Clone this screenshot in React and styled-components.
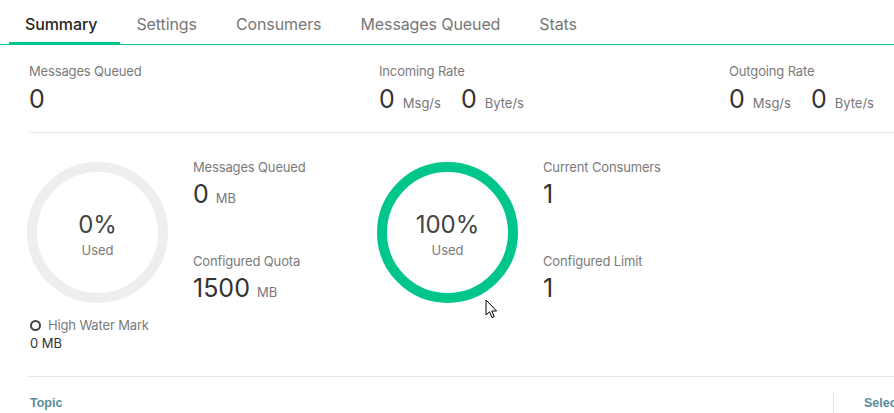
import React from "react";
import styled, { createGlobalStyle } from "styled-components";

const Global = createGlobalStyle`
  html, body { margin: 0; padding: 0; background: #fff; overflow: hidden; }
  body { font-family: "Inter", "Noto Sans", "Liberation Sans", sans-serif; color: #333; }
`;

const GREEN = "#00c68b";

const Page = styled.div`
  position: relative;
  width: 894px;
  height: 413px;
  overflow: hidden;
`;

const TabBar = styled.div`
  display: flex;
  height: 44px;
  padding-left: 9px;
  border-bottom: 1px solid ${GREEN};
`;

const Tab = styled.div`
  position: relative;
  display: flex;
  align-items: center;
  padding: 4px 23px 0 16px;
  font-size: 16px;
  letter-spacing: -0.1px;
  color: ${(p) => (p.$active ? "#262626" : "#777")};
  font-weight: ${(p) => (p.$active ? 500 : 400)};
  &::after {
    content: "";
    display: ${(p) => (p.$active ? "block" : "none")};
    position: absolute;
    left: 0;
    right: 0;
    bottom: -1px;
    height: 3px;
    background: ${GREEN};
  }
`;

const Content = styled.div`
  padding-left: 29px;
  width: 1100px;
`;

const StatsRow = styled.div`
  display: grid;
  grid-template-columns: repeat(3, 350px);
  padding: 18px 0 18px;
  border-bottom: 1px solid #e6e6e6;
`;

const Stat = styled.div`
  display: flex;
  flex-direction: column;
`;

const Label = styled.div`
  font-size: 13px;
  line-height: 16px;
  letter-spacing: -0.15px;
  color: #7b7b7b;
  white-space: nowrap;
`;

const ValueLine = styled.div`
  display: flex;
  align-items: baseline;
  margin-top: ${(p) => p.$mt ?? 5}px;
  white-space: nowrap;
`;

const Value = styled.span`
  font-size: 25px;
  line-height: 30px;
  color: #333;
  margin-left: ${(p) => p.$ml || 0}px;
`;

const Unit = styled.span`
  font-size: 13px;
  color: #777;
  margin-left: ${(p) => p.$ml ?? 8}px;
`;

const GaugeRow = styled.div`
  display: grid;
  grid-template-columns: repeat(2, 350px);
  box-sizing: border-box;
  padding-top: 29px;
  margin-left: -2px;
  height: 244px;
  border-bottom: 1px solid #e6e6e6;
`;

const GaugeGroup = styled.div`
  display: flex;
  gap: 25px;
`;

const Ring = styled.div`
  width: 141px;
  height: 141px;
  flex: none;
  box-sizing: border-box;
  border-radius: 50%;
  border: 10px solid ${(p) => p.$color};
  display: flex;
  flex-direction: column;
  align-items: center;
  justify-content: center;
`;

const RingValue = styled.div`
  font-size: 24px;
  line-height: 28px;
  color: #444;
  margin-top: 3px;
`;

const RingSub = styled.div`
  font-size: 13px;
  line-height: 16px;
  color: #7b7b7b;
  margin-top: 3px;
`;

const Details = styled.div`
  display: flex;
  flex-direction: column;
  gap: 44px;
  margin-top: -3px;
`;

const Mark = styled.div`
  display: flex;
  align-items: center;
  gap: 7px;
  margin-top: 14px;
  margin-left: 3px;
  font-size: 13px;
  line-height: 16px;
  letter-spacing: -0.15px;
  color: #7b7b7b;
`;

const MarkDot = styled.span`
  width: 11px;
  height: 11px;
  box-sizing: border-box;
  border: 2px solid #444;
  border-radius: 50%;
`;

const MarkValue = styled.div`
  margin-left: 3px;
  margin-top: 2px;
  font-size: 13px;
  line-height: 16px;
  color: #333;
`;

const TableHead = styled.div`
  display: flex;
  height: 36px;
  align-items: flex-end;
  font-family: "Liberation Sans", Arial, sans-serif;
  font-weight: 700;
  font-size: 12.5px;
  color: #5b8c9c;
`;

const HeadCell = styled.div`
  width: ${(p) => p.$w}px;
  padding-left: ${(p) => p.$pl || 0}px;
  height: 21px;
  line-height: 20px;
  box-sizing: border-box;
  border-left: ${(p) => (p.$sep ? "1px solid #e4e4e4" : "none")};
  padding-top: 1px;
  white-space: nowrap;
`;

const Cursor = styled.svg`
  position: absolute;
  left: 485px;
  top: 299px;
`;

function Gauge({ pct, color, items }) {
  return (
    <GaugeGroup>
      <Ring $color={color}>
        <RingValue>{pct}</RingValue>
        <RingSub>Used</RingSub>
      </Ring>
      <Details>
        {items.map((it) => (
          <div key={it.label}>
            <Label>{it.label}</Label>
            <ValueLine $mt={4}>
              <Value>{it.value}</Value>
              {it.unit && <Unit $ml={7}>{it.unit}</Unit>}
            </ValueLine>
          </div>
        ))}
      </Details>
    </GaugeGroup>
  );
}

function Rate({ label }) {
  return (
    <Stat>
      <Label>{label}</Label>
      <ValueLine>
        <Value>0</Value>
        <Unit>Msg/s</Unit>
        <Value $ml={20}>0</Value>
        <Unit>Byte/s</Unit>
      </ValueLine>
    </Stat>
  );
}

export default function App() {
  const tabs = ["Summary", "Settings", "Consumers", "Messages Queued", "Stats"];
  return (
    <Page>
      <Global />
      <TabBar>
        {tabs.map((t, i) => (
          <Tab key={t} $active={i === 0}>
            {t}
          </Tab>
        ))}
      </TabBar>
      <Content>
        <StatsRow>
          <Stat>
            <Label>Messages Queued</Label>
            <ValueLine>
              <Value>0</Value>
            </ValueLine>
          </Stat>
          <Rate label="Incoming Rate" />
          <Rate label="Outgoing Rate" />
        </StatsRow>
        <GaugeRow>
          <div>
            <Gauge
              pct="0%"
              color="#eeeeee"
              items={[
                { label: "Messages Queued", value: "0", unit: "MB" },
                { label: "Configured Quota", value: "1500", unit: "MB" },
              ]}
            />
            <Mark>
              <MarkDot />
              High Water Mark
            </Mark>
            <MarkValue>0 MB</MarkValue>
          </div>
          <div>
            <Gauge
              pct="100%"
              color={GREEN}
              items={[
                { label: "Current Consumers", value: "1" },
                { label: "Configured Limit", value: "1" },
              ]}
            />
          </div>
        </GaugeRow>
        <TableHead>
          <HeadCell $w={804} $pl={1}>Topic</HeadCell>
          <HeadCell $w={200} $pl={30} $sep>Select</HeadCell>
        </TableHead>
      </Content>
      <Cursor width="14" height="21" viewBox="0 0 14 21">
        <path
          d="M1 1 L1 16 L4.5 12.8 L7 18.6 L9.2 17.6 L6.8 12 L11.6 12 Z"
          fill="#fff"
          stroke="#000"
          strokeWidth="1"
        />
      </Cursor>
    </Page>
  );
}
